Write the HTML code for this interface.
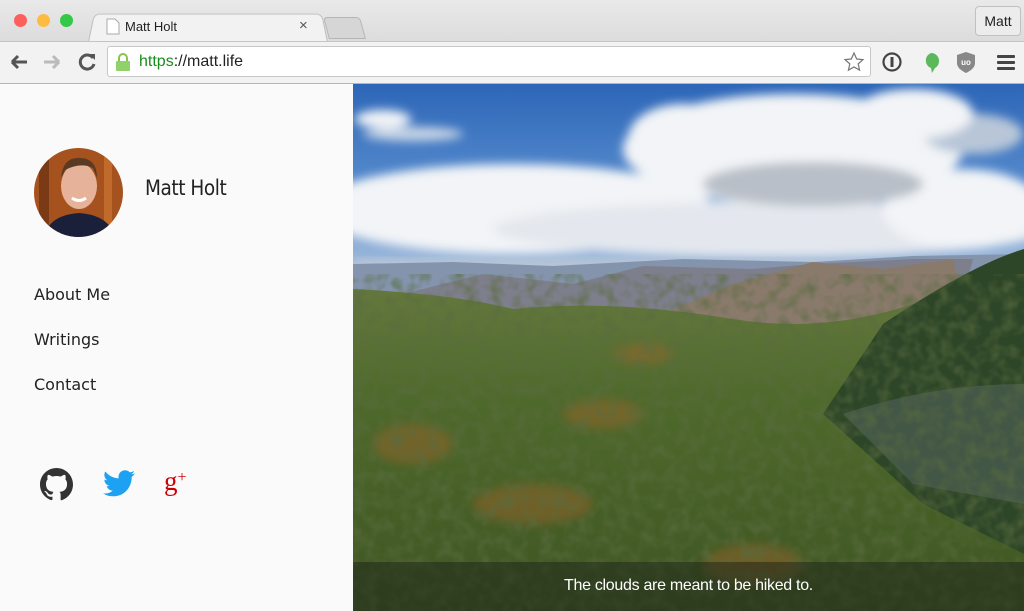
<!DOCTYPE html>
<html><head><meta charset="utf-8"><style>
*{margin:0;padding:0;box-sizing:border-box}
body{width:1024px;height:611px;overflow:hidden;font-family:"Liberation Sans",sans-serif;background:#fafafa;position:relative}
.tabbar{position:absolute;left:0;top:0;width:1024px;height:41px;background:linear-gradient(#e9e9e9,#dcdcdc)}
.dot{position:absolute;top:14px;width:13px;height:13px;border-radius:50%}
.tab{position:absolute;left:88px;top:12px;width:240px;height:30px;background:#f2f2f2;border:1px solid #bdbdbd;border-bottom:none;border-radius:6px 6px 0 0;transform:perspective(60px) rotateX(6deg);transform-origin:bottom}
.tabtxt{position:absolute;left:125px;top:19px;font-size:13px;color:#222}
.toolbar{position:absolute;left:0;top:41px;width:1024px;height:43px;background:#f2f2f2;border-top:1px solid #c4c4c4;border-bottom:1px solid #b5b5b5}
.url{position:absolute;left:107px;top:46px;width:764px;height:31px;background:#fff;border:1px solid #c7c7c7;border-radius:3px}
.urltxt{position:absolute;left:139px;top:53px;font-size:16px;color:#222}
.side{position:absolute;left:0;top:84px;width:353px;height:527px;background:#fafafa}
.nav{position:absolute;left:34px;font-family:"DejaVu Sans",sans-serif;font-size:16px;color:#222}
</style></head><body>
<div class="tabbar"></div>
<div class="dot" style="left:14px;background:#fc605c"></div>
<div class="dot" style="left:37px;background:#fdbc40"></div>
<div class="dot" style="left:60px;background:#34c84a"></div>
<div class="tab"></div>
<svg style="position:absolute;left:106px;top:18px" width="14" height="17"><path d="M1 1h8l4 4v11H1z" fill="#fff" stroke="#aaa"/></svg>
<div class="tabtxt">Matt Holt</div>
<div style="position:absolute;left:299px;top:17px;font-size:15px;color:#555">×</div>
<div style="position:absolute;left:326px;top:17px;width:37px;height:22px;background:#d6d6d6;border:1px solid #b5b5b5;border-radius:4px 4px 0 0;transform:skewX(15deg)"></div>
<div style="position:absolute;left:975px;top:6px;width:46px;height:30px;border:1px solid #c0c0c0;border-radius:4px;background:#ececec;font-size:14px;line-height:29px;text-align:center;color:#222">Matt</div>
<div class="toolbar"></div>
<svg style="position:absolute;left:9px;top:52px" width="90" height="22">
<path d="M3 10h15M3 10l6-6M3 10l6 6" stroke="#555" stroke-width="3" fill="none"/>
<path d="M35 10h15M50 10l-6-6M50 10l-6 6" stroke="#bbb" stroke-width="3" fill="none"/>
<path d="M84 6a7 7 0 1 0 1 6" stroke="#555" stroke-width="3" fill="none"/><path d="M80 2l6 0 0 6z" fill="#555"/>
</svg>
<div class="url"></div>
<svg style="position:absolute;left:115px;top:52px" width="16" height="20"><path d="M4 9V6a4 4 0 0 1 8 0v3" stroke="#8bc34a" stroke-width="2" fill="none"/><rect x="1" y="9" width="14" height="10" rx="1" fill="#8fd16a"/></svg>
<div class="urltxt"><span style="color:#1a8d1a">https</span>://matt.life</div>
<svg style="position:absolute;left:843px;top:51px" width="22" height="22"><path d="M11 2l2.7 6 6.3.6-4.8 4.3 1.4 6.3L11 16l-5.6 3.2 1.4-6.3L2 8.6 8.3 8z" fill="#fff" stroke="#777" stroke-width="1.2"/></svg>
<svg style="position:absolute;left:880px;top:50px" width="140" height="24">
<circle cx="12" cy="12" r="8.5" fill="none" stroke="#444" stroke-width="2.2"/><rect x="10.5" y="7" width="3" height="10" fill="#444"/>
<path d="M51 3a8 8 0 0 1 4 15l-3 5-1-5a8 8 0 0 1 0-15z" fill="#5cb85c"/>
<path d="M77 5l9-3 9 3v8c0 5-5 8-9 10-4-2-9-5-9-10z" fill="#888"/><text x="86" y="15" font-size="8" font-weight="bold" fill="#fff" text-anchor="middle">uo</text>
<rect x="117" y="5" width="18" height="3" rx="1" fill="#444"/><rect x="117" y="11" width="18" height="3" rx="1" fill="#444"/><rect x="117" y="17" width="18" height="3" rx="1" fill="#444"/>
</svg>
<div class="side"></div>
<svg style="position:absolute;left:34px;top:148px" width="89" height="89">
<defs><clipPath id="c"><circle cx="44.5" cy="44.5" r="44.5"/></clipPath></defs>
<g clip-path="url(#c)"><rect width="89" height="89" fill="#a5521e"/><rect x="5" width="10" height="89" fill="#7a3a16"/><rect x="70" width="8" height="89" fill="#c06a2c"/>
<ellipse cx="45" cy="38" rx="18" ry="23" fill="#e6b39a"/><path d="M27 30q2-22 20-20 16 1 16 20l-4-10q-12-6-28 2z" fill="#5a3a22"/>
<path d="M38 50q7 5 14 0" stroke="#fff" stroke-width="3" fill="none"/>
<path d="M10 89q5-22 35-24 30 2 36 24z" fill="#1a1f3a"/></g></svg>
<div style="position:absolute;left:145px;top:176px;font-family:'DejaVu Sans',sans-serif;font-size:21px;color:#222;letter-spacing:-0.5px;transform:scaleX(0.88);transform-origin:left">Matt Holt</div>
<div class="nav" style="top:285px">About Me</div>
<div class="nav" style="top:330px">Writings</div>
<div class="nav" style="top:375px">Contact</div>
<svg style="position:absolute;left:40px;top:468px" width="33" height="33" viewBox="0 0 16 16"><path fill="#333" d="M8 0C3.58 0 0 3.580 0 8c0 3.54 2.29 6.53 5.47 7.59.4.07.55-.17.55-.38v-1.330c-2.23.48-2.7-1.07-2.7-1.07-.36-.93-.89-1.17-.89-1.17-.73-.5.06-.49.06-.49.8.06 1.23.83 1.23.83.71 1.23 1.87.87 2.330.66.07-.52.28-.87.5-1.07-1.78-.2-3.64-.89-3.64-3.95 0-.87.31-1.59.82-2.15-.08-.2-.36-1.020.08-2.12 0 0 .67-.21 2.2.82a7.6 7.6 0 0 1 4 0c1.53-1.04 2.2-.82 2.2-.82.44 1.1.16 1.92.08 2.12.51.56.82 1.27.82 2.15 0 3.07-1.87 3.75-3.65 3.95.29.25.54.73.54 1.48v2.2c0 .21.15.46.55.38A8.01 8.01 0 0 0 16 8c0-4.42-3.58-8-8-8z"/></svg>
<svg style="position:absolute;left:103px;top:470px" width="32" height="27" viewBox="0 0 24 20"><path fill="#1da1f2" d="M24 2.4a9.8 9.8 0 0 1-2.8.8A4.9 4.9 0 0 0 23.3.5a9.9 9.9 0 0 1-3.1 1.2A4.9 4.9 0 0 0 11.8 6.2 14 14 0 0 1 1.7 1a4.9 4.9 0 0 0 1.5 6.6A4.9 4.9 0 0 1 1 7v.1a4.9 4.9 0 0 0 3.9 4.8 4.9 4.9 0 0 1-2.2.1 4.9 4.9 0 0 0 4.6 3.4A9.9 9.9 0 0 1 0 17.4 14 14 0 0 0 7.5 19.6c9.1 0 14-7.5 14-14v-.6A10 10 0 0 0 24 2.4z"/></svg>
<div style="position:absolute;left:164px;top:466px;font-family:'Liberation Serif',serif;font-size:27px;color:#c00">g<span style="font-size:16px;vertical-align:8px">+</span></div>
<svg style="position:absolute;left:353px;top:84px" width="671" height="527" viewBox="0 0 671 527" preserveAspectRatio="none">
<defs><linearGradient id="sky" x1="0" y1="0" x2="0" y2="1"><stop offset="0" stop-color="#2d66b8"/><stop offset="0.6" stop-color="#5b8fcf"/><stop offset="1" stop-color="#aac0dc"/></linearGradient>
<linearGradient id="g" x1="0" y1="0" x2="0" y2="1"><stop offset="0" stop-color="#6d7d45"/><stop offset="0.4" stop-color="#4f6a2c"/><stop offset="1" stop-color="#3e5522"/></linearGradient>
<filter id="b"><feGaussianBlur stdDeviation="5"/></filter>
<filter id="n" x="0" y="0" width="100%" height="100%"><feTurbulence type="fractalNoise" baseFrequency="0.08" numOctaves="2" seed="3"/><feColorMatrix values="0 0 0 0 0.1  0 0 0 0 0.15  0 0 0 0 0.05  0 0 0 1.4 -0.55"/></filter></defs>
<rect width="671" height="190" fill="url(#sky)"/>
<g filter="url(#b)" fill="#f2f4f7">
<ellipse cx="440" cy="65" rx="170" ry="55"/><ellipse cx="330" cy="55" rx="55" ry="35"/><ellipse cx="160" cy="125" rx="200" ry="45"/>
<ellipse cx="420" cy="145" rx="280" ry="28" fill="#e4e8ee"/><ellipse cx="610" cy="125" rx="80" ry="40"/><ellipse cx="620" cy="50" rx="50" ry="20" fill="#b8c6d8"/>
<ellipse cx="30" cy="35" rx="28" ry="9"/><ellipse cx="60" cy="50" rx="50" ry="7" fill="#c9d6e6"/><ellipse cx="460" cy="100" rx="110" ry="22" fill="#b9bfc8"/><ellipse cx="560" cy="30" rx="60" ry="25"/></g>
<rect y="175" width="671" height="25" fill="#b8c6d6" filter="url(#b)"/>
<path d="M0 180L100 178 200 182 330 175 460 178 560 172 671 170 671 240 0 240z" fill="#8494ad"/>
<path d="M50 210L130 190 220 200 290 182 400 185 460 180 560 175 620 175 600 250 300 245z" fill="#7e7f8c"/>
<path d="M310 230L380 200 460 178 530 185 600 175 620 250 400 260z" fill="#8a7a6c"/>
<path d="M0 205Q100 210 160 225 260 215 380 235 470 250 560 220 620 190 671 165V527H0z" fill="url(#g)"/>
<path d="M530 240Q620 180 671 165V470L570 420 470 330z" fill="#2e4628"/>
<path d="M490 330Q580 300 671 300V420L560 400z" fill="#4d5e52" opacity="0.7"/>
<g fill="#a2642c" opacity="0.45" filter="url(#b)"><ellipse cx="250" cy="330" rx="40" ry="15"/><ellipse cx="180" cy="420" rx="60" ry="20"/><ellipse cx="290" cy="270" rx="30" ry="10"/><ellipse cx="60" cy="360" rx="40" ry="20"/><ellipse cx="400" cy="480" rx="50" ry="20"/></g>
<rect y="190" width="671" height="337" filter="url(#n)"/>
<rect y="478" width="671" height="49" fill="#1c2418" opacity="0.5"/>
</svg>
<div style="position:absolute;left:353px;top:577px;width:671px;text-align:center;color:#fff;font-size:16px;letter-spacing:-0.3px">The clouds are meant to be hiked to.</div>
</body></html>
